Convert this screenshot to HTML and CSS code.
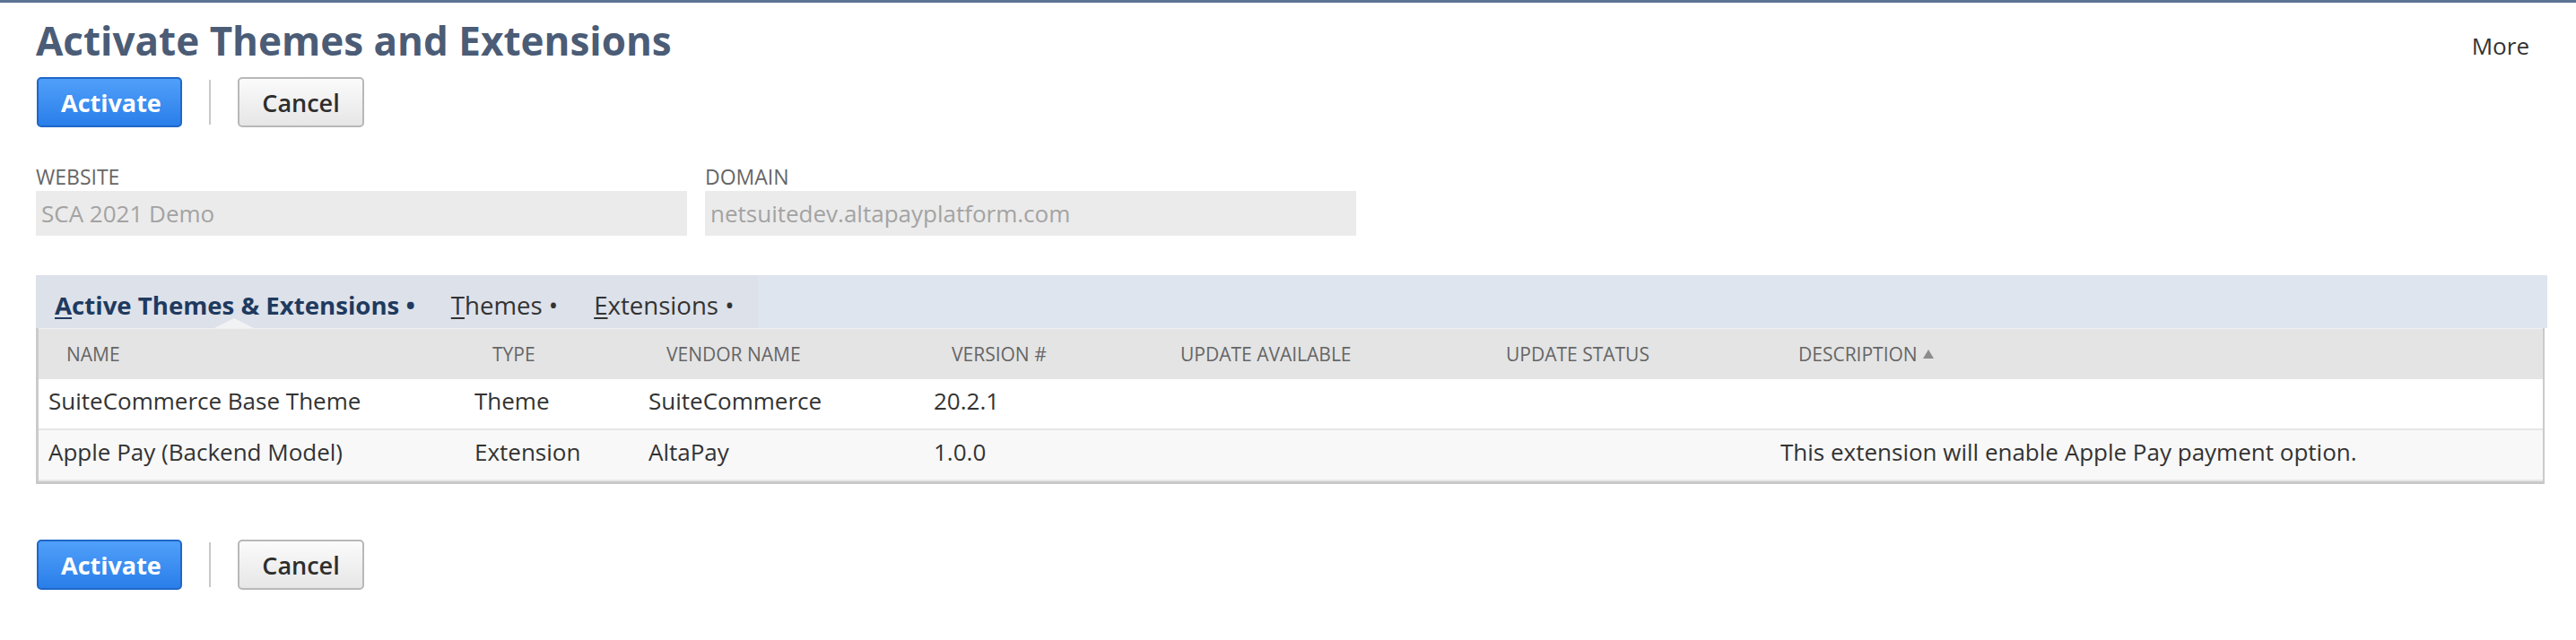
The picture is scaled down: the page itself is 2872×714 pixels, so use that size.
FILE: index.html
```html
<!DOCTYPE html>
<html lang="en">
<head>
<meta charset="utf-8">
<title>Activate Themes and Extensions</title>
<link rel="stylesheet" href="styles.css">
</head>
<body>
<div class="topbar"></div>
<main class="page">
  <div class="title-row">
    <h1 class="title">Activate Themes and Extensions</h1>
    <a class="more">More</a>
  </div>

  <div class="actions actions-top">
    <button class="btn btn-primary">Activate</button>
    <span class="sep"></span>
    <button class="btn btn-secondary">Cancel</button>
  </div>

  <div class="fields">
    <div class="field">
      <div class="field-label">WEBSITE</div>
      <div class="field-value">SCA 2021 Demo</div>
    </div>
    <div class="field">
      <div class="field-label">DOMAIN</div>
      <div class="field-value">netsuitedev.altapayplatform.com</div>
    </div>
  </div>

  <section class="tabbox">
    <div class="tabbar">
      <div class="tablist">
        <span class="tab tab-active"><u>A</u>ctive Themes &amp; Extensions •<span class="pointer"></span></span>
        <span class="tab"><u>T</u>hemes •</span>
        <span class="tab"><u>E</u>xtensions •</span>
      </div>
    </div>
    <div class="grid">
      <div class="row head">
        <div class="th">NAME</div>
        <div class="th">TYPE</div>
        <div class="th">VENDOR NAME</div>
        <div class="th">VERSION #</div>
        <div class="th">UPDATE AVAILABLE</div>
        <div class="th">UPDATE STATUS</div>
        <div class="th">DESCRIPTION<span class="sort"></span></div>
      </div>
      <div class="row body">
        <div class="td">SuiteCommerce Base Theme</div>
        <div class="td">Theme</div>
        <div class="td">SuiteCommerce</div>
        <div class="td">20.2.1</div>
        <div class="td"></div>
        <div class="td"></div>
        <div class="td"></div>
      </div>
      <div class="row body alt">
        <div class="td">Apple Pay (Backend Model)</div>
        <div class="td">Extension</div>
        <div class="td">AltaPay</div>
        <div class="td">1.0.0</div>
        <div class="td"></div>
        <div class="td"></div>
        <div class="td">This extension will enable Apple Pay payment option.</div>
      </div>
    </div>
  </section>

  <div class="actions actions-bottom">
    <button class="btn btn-primary">Activate</button>
    <span class="sep"></span>
    <button class="btn btn-secondary">Cancel</button>
  </div>
</main>
</body>
</html>
```

FILE: styles.css
```css
* { box-sizing: border-box; }

html, body {
  margin: 0;
  padding: 0;
  background: #ffffff;
}

body {
  font-family: "Open Sans", "Liberation Sans", sans-serif;
  color: #333333;
}

.topbar {
  height: 3px;
  background: #5c7394;
}

.page {
  padding: 0 32px 0 40px;
}

.title-row {
  display: flex;
  justify-content: space-between;
  align-items: baseline;
  padding-top: 12px;
}

.title {
  margin: 0;
  font-size: 44px;
  line-height: 60px;
  font-weight: 700;
  color: #4b5c76;
}

.more {
  font-size: 26px;
  color: #333333;
  margin-right: 20px;
  position: relative;
  top: -1px;
}

.actions {
  display: flex;
  align-items: center;
  padding-left: 1px;
}

.actions-top {
  margin-top: 11px;
}

.actions-bottom {
  margin-top: 62px;
}

.btn {
  height: 56px;
  padding: 0 25px;
  border-radius: 5px;
  font-family: "Open Sans", "Liberation Sans", sans-serif;
  font-size: 27px;
  line-height: 1;
  cursor: pointer;
}

.btn-primary {
  width: 162px;
  border: 2px solid #1f67c8;
  background: linear-gradient(#50a0fa, #2a7ee9);
  color: #ffffff;
  font-weight: 700;
}

.btn-secondary {
  width: 141px;
  border: 2px solid #b8b8b8;
  background: linear-gradient(#fbfbfb, #e6e6e6);
  color: #2e2e2e;
  font-weight: 600;
}

.sep {
  width: 2px;
  height: 50px;
  background: #c8c8c8;
  margin: 0 30px;
}

.fields {
  display: flex;
  gap: 20px;
  margin-top: 40px;
}

.field {
  width: 726px;
}

.field-label {
  font-size: 23px;
  line-height: 31px;
  color: #666666;
}

.field-value {
  height: 50px;
  background: #ebebeb;
  padding-left: 6px;
  font-size: 26px;
  line-height: 50px;
  color: #a3a3a3;
}

.tabbox {
  margin-top: 44px;
}

.tabbar {
  display: flex;
  background: #dfe5ee;
  height: 59px;
}

.tablist {
  display: flex;
  background: #dde1e9;
  padding-right: 6px;
}

.tab {
  position: relative;
  padding: 7px 20px 0;
  font-size: 27.6px;
  line-height: 52px;
  color: #333333;
  white-space: nowrap;
}

.tab:first-child {
  padding-left: 21px;
}

.tab u {
  text-decoration-thickness: 2px;
  text-underline-offset: 3px;
}

.tab-active {
  font-weight: 700;
  color: #1f3a5f;
}

.pointer {
  position: absolute;
  left: 50%;
  bottom: 0;
  margin-left: -22px;
  width: 0;
  height: 0;
  border-left: 22px solid transparent;
  border-right: 22px solid transparent;
  border-bottom: 11px solid #f1f2f4;
}

.grid {
  border-left: 3px solid #cbcbcb;
  border-right: 2px solid #cbcbcb;
  border-bottom: 3px solid #c8c8c8;
  margin-right: 3px;
}

.row {
  display: grid;
  grid-template-columns: 475px 194px 318px 255px 363px 326px 1fr;
}

.head {
  background: #e4e4e4;
  height: 57px;
  border-top: 1px solid #eef0f3;
}

.th {
  padding-left: 31px;
  font-size: 21px;
  line-height: 56px;
  color: #666666;
  white-space: nowrap;
  display: flex;
  align-items: center;
}

.sort {
  display: inline-block;
  width: 0;
  height: 0;
  margin-left: 6px;
  border-left: 6px solid transparent;
  border-right: 6px solid transparent;
  border-bottom: 10px solid #8c8c8c;
}

.body {
  background: #ffffff;
  border-bottom: 2px solid #e6e6e6;
}

.body.alt {
  background: #f8f8f8;
}

.td {
  padding: 6px 0 13px 11px;
  font-size: 26px;
  line-height: 36px;
  color: #333333;
  white-space: nowrap;
  min-height: 55px;
}
```
